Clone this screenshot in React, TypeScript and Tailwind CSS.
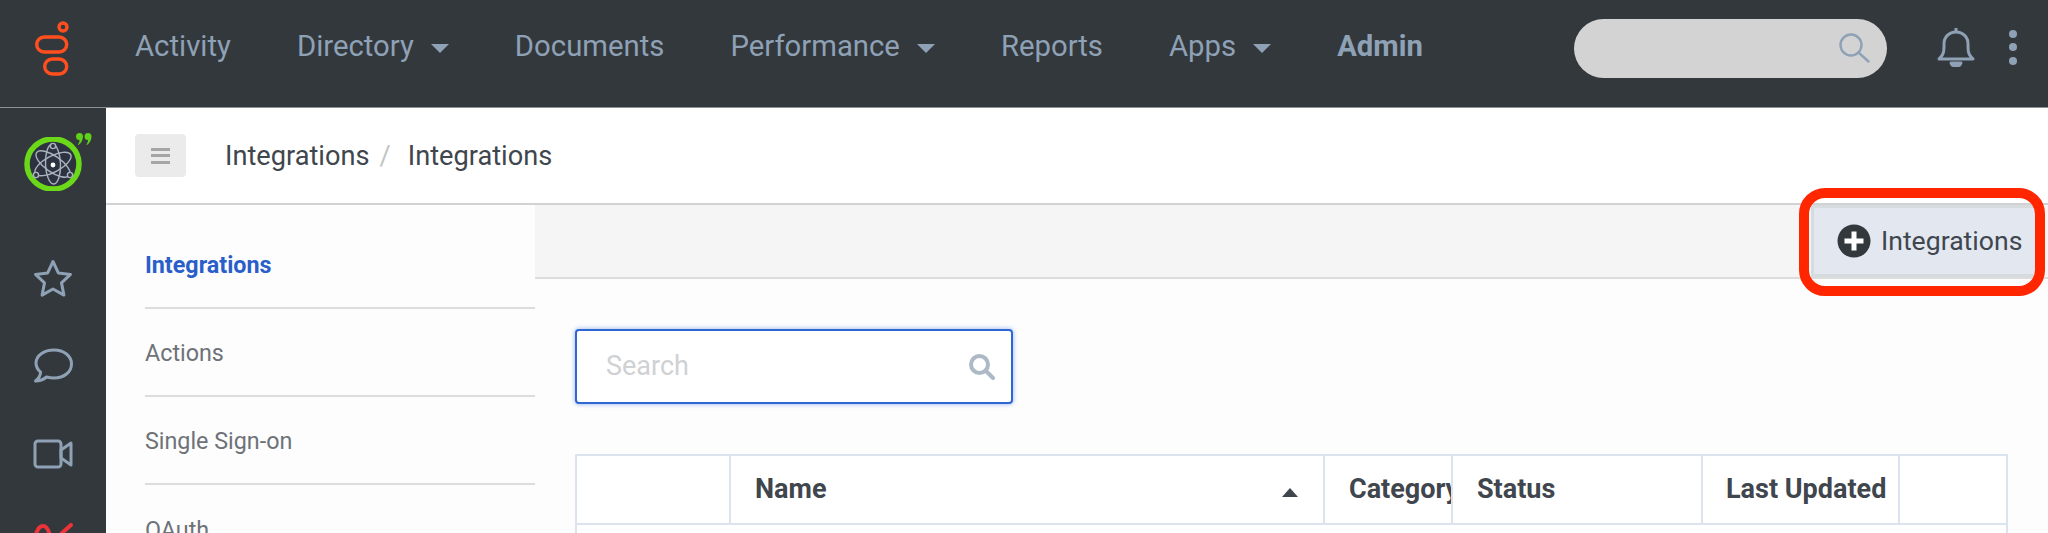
import { ReactNode } from 'react'

const navEntries = [
  { title: 'Activity' },
  { title: 'Directory', caret: true },
  { title: 'Documents' },
  { title: 'Performance', caret: true },
  { title: 'Reports' },
  { title: 'Apps', caret: true },
  { title: 'Admin', bold: true },
]

const sideEntries = ['Integrations', 'Actions', 'Single Sign-on', 'OAuth']

const GenesysLogo = () => (
  <svg width="36" height="56" viewBox="0 0 36 56" fill="none" stroke="#ff4f1f" strokeWidth="3.4">
    <circle cx="29" cy="6" r="4" />
    <rect x="2.700" y="16" width="30" height="15" rx="7.500" />
    <rect x="10.700" y="38" width="22" height="15" rx="7.500" />
  </svg>
)

const Avatar = () => (
  <div className="relative h-[54px] w-[58px]">
    <svg width="58" height="54" viewBox="0 0 58 54" fill="none">
      <ellipse cx="29" cy="27" rx="26" ry="25" fill="#2d3240" stroke="#6bd91a" strokeWidth="5.5" />
      <g stroke="#aab4bd" strokeWidth="1.4">
        <ellipse cx="29" cy="27" rx="20" ry="8" transform="rotate(-28 29 27)" />
        <ellipse cx="29" cy="27" rx="20" ry="8" transform="rotate(35 29 27)" />
        <ellipse cx="29" cy="27" rx="20" ry="7.5" transform="rotate(88 29 27)" />
        <circle cx="29" cy="9" r="2.6" fill="#2d3240" />
        <circle cx="12" cy="38" r="2.6" fill="#2d3240" />
        <circle cx="46" cy="38" r="2.6" fill="#2d3240" />
      </g>
      <circle cx="29" cy="28" r="2.4" fill="#ffffff" />
    </svg>
    {/* little quote badge on the avatar */}
    <svg className="absolute left-[52px] top-[-4px]" width="16" height="13" viewBox="0 0 16 13" fill="#5fd117">
      <path d="M0 3.500a3.500 3.500 0 0 1 7 0c0 3.500-2 7-4.500 8.500l-.6-.8c1-1 1.500-2 1.600-4.200A3.500 3.500 0 0 1 0 3.500z" />
      <path d="M8.500 3.500a3.500 3.500 0 0 1 7 0c0 3.500-2 7-4.500 8.500l-.6-.8c1-1 1.500-2 1.600-4.200a3.500 3.500 0 0 1-3.500-3.500z" />
    </svg>
  </div>
)

const RailIcon = ({ children, className }: { children: ReactNode; className: string }) => (
  <div className={`flex justify-center ${className}`}>{children}</div>
)

const Rail = () => (
  <div className="flex w-[106px] shrink-0 flex-col items-center bg-[#33383d]">
    <div className="mt-[29px]">
      <Avatar />
    </div>
    <RailIcon className="mt-[68px]">
      <svg width="40" height="39" viewBox="0 0 40 39" fill="none" stroke="#8ea1b5" strokeWidth="3" strokeLinejoin="round">
        <path d="M20 2.5l5.3 11.4 12.2 1.5-9 8.5 2.4 12.2L20 30l-10.900 6.100 2.400-12.200-9-8.500 12.200-1.500z" />
      </svg>
    </RailIcon>
    <RailIcon className="mt-[50px]">
      <svg width="40" height="35" viewBox="0 0 40 35" fill="none" stroke="#8ea1b5" strokeWidth="3" strokeLinejoin="round">
        <path d="M21 2C11 2 3 7.500 3 15c0 3.500 1.800 6.800 4.600 9.200C7.400 27.500 5.500 30.800 2.500 33c4.500 0 8.300-1.700 11-4 2.300.6 4.800 1 7.500 1 10 0 17.500-6 17.500-14S31 2 21 2z" />
      </svg>
    </RailIcon>
    <RailIcon className="mt-[56px]">
      <svg width="40" height="30" viewBox="0 0 40 30" fill="none" stroke="#8ea1b5" strokeWidth="3" strokeLinejoin="round">
        <rect x="2" y="2" width="26" height="26" rx="3" />
        <path d="M28 11l10-7v22l-10-7z" />
      </svg>
    </RailIcon>
    <RailIcon className="mt-[54px]">
      <svg width="40" height="20" viewBox="0 0 40 20" fill="none" stroke="#ee3338" strokeWidth="4" strokeLinecap="round">
        <path d="M2 20c0-9 3-17 8-17 5 0 7 7 8 17M18 20L38 2" />
      </svg>
    </RailIcon>
  </div>
)

const HeaderCell = ({
  width,
  children,
  last,
  className = '',
}: {
  width: string
  children?: ReactNode
  last?: boolean
  className?: string
}) => (
  <div
    className={`flex h-full shrink-0 items-center text-[27px] font-bold text-[#3f464d] ${width} ${
      last ? '' : 'border-r-2 border-[#dbe3ee]'
    } ${className}`}
  >
    {children}
  </div>
)

export default function App() {
  return (
    <div className="relative flex h-[533px] w-[2048px] flex-col overflow-hidden bg-white font-['Roboto',sans-serif]">
      {/* top bar */}
      <div className="flex h-[108px] shrink-0 items-center border-b border-[#8d9196] bg-[#33383d] pb-[13px]">
        <div className="flex w-[135px] shrink-0 justify-start pl-[34px] pt-[4px]">
          <GenesysLogo />
        </div>
        <div className="flex items-center gap-[66px] text-[29.3px] text-[#8ea1b5]">
          {navEntries.map((item) => (
            <div key={item.title} className={`flex items-center ${item.bold ? 'font-bold' : ''}`}>
              {item.title}
              {item.caret && (
                <div className="ml-[17px] mt-[2px] h-0 w-0 border-x-[9px] border-t-[9px] border-x-transparent border-t-[#8ea1b5]" />
              )}
            </div>
          ))}
        </div>
        <div className="flex-1" />
        <div className="mt-[2px] flex h-[59px] w-[313px] items-center justify-end rounded-full bg-[#d3d3d3] pr-[17px]">
          <svg width="32" height="32" viewBox="0 0 32 32" fill="none" stroke="#8ea1b5" strokeWidth="2.400" strokeLinecap="round">
            <circle cx="13" cy="13" r="10.500" />
            <path d="M21 21l9.500 8.500" />
          </svg>
        </div>
        <svg className="ml-[50px]" width="38" height="40" viewBox="0 0 38 40" fill="none" stroke="#8ea1b5" strokeWidth="3" strokeLinejoin="round">
          <path d="M2 32c3-3 5-5 5-12v-3c0-7 5-12 12-12s12 5 12 12v3c0 7 2 9 5 12z" />
          <path d="M19 1v3" />
          <path d="M14 36c1 4 9 4 10 0z" fill="#8ea1b5" />
        </svg>
        <div className="ml-[34px] mr-[31px] flex flex-col gap-[5.500px]">
          <div className="h-[8px] w-[8px] rounded-full bg-[#8ea1b5]" />
          <div className="h-[8px] w-[8px] rounded-full bg-[#8ea1b5]" />
          <div className="h-[8px] w-[8px] rounded-full bg-[#8ea1b5]" />
        </div>
      </div>

      <div className="flex min-h-0 flex-1">
        <Rail />
        <div className="flex min-w-0 flex-1 flex-col">
          {/* breadcrumb */}
          <div className="flex h-[97px] shrink-0 items-center border-b-2 border-[#d2d2d2] pl-[29px]">
            <div className="flex h-[43px] w-[51px] items-center justify-center rounded-[4px] bg-[#ebebeb]">
              <div className="flex flex-col gap-[3.500px]">
                <div className="h-[3px] w-[19px] bg-[#a6a6a6]" />
                <div className="h-[3px] w-[19px] bg-[#a6a6a6]" />
                <div className="h-[3px] w-[19px] bg-[#a6a6a6]" />
              </div>
            </div>
            <div className="ml-[39px] mt-[1px] flex items-center text-[27.2px] text-[#3f464d]">
              Integrations
              <span className="ml-[10px] mr-[17px] text-[#c4c4c4]">/</span>
              Integrations
            </div>
          </div>

          <div className="flex min-h-0 flex-1">
            {/* section menu */}
            <div className="w-[429px] shrink-0 bg-[#fdfdfd] pl-[39px] pt-[16px] text-[23.3px] text-[#6d7278]">
              {sideEntries.map((title, i) => (
                <div
                  key={title}
                  className={`flex h-[88px] items-center pt-[3px] ${i === 0 ? 'font-bold text-[#2a5fc9]' : ''} ${
                    i < 3 ? 'border-b-2 border-[#dcdcdc]' : ''
                  }`}
                >
                  {title}
                </div>
              ))}
            </div>

            <div className="flex min-w-0 flex-1 flex-col bg-[#fdfdfd]">
              {/* toolbar */}
              <div className="flex h-[74px] shrink-0 justify-end border-b-2 border-[#dcdcdc] bg-[#f5f5f5] pr-[13px]">
                <div className="flex w-[224px] items-center border-y-[3px] border-l-[3px] border-[#d6dbe0] bg-[#e2e7f0] pl-[23px]">
                  <svg width="34" height="34" viewBox="0 0 34 34">
                    <circle cx="17" cy="17" r="16.500" fill="#33383d" />
                    <path d="M14.500 7.500h5v7h7v5h-7v7h-5v-7h-7v-5h7z" fill="#ffffff" />
                  </svg>
                  <span className="ml-[10px] text-[26.6px] text-[#3f464d]">Integrations</span>
                </div>
              </div>

              {/* search */}
              <div className="ml-[40px] mt-[50px] flex h-[75px] w-[438px] shrink-0 items-center justify-between rounded-[4px] border-2 border-[#2f66d0] bg-white pl-[29px] pr-[16px] text-[27px] text-[#cfd1d3] shadow-[0_0_5px_#8fb0ee]">
                Search
                <svg width="27" height="27" viewBox="0 0 27 27" fill="none" stroke="#adb9c6" strokeWidth="4" strokeLinecap="round">
                  <circle cx="11.500" cy="11.500" r="8.500" />
                  <path d="M18 18l7 7" />
                </svg>
              </div>

              {/* table */}
              <div className="ml-[40px] mt-[50px] h-[100px] w-[1433px] shrink-0 border-x-2 border-[#dbe3ee] bg-white">
                <div className="flex h-[71px] border-y-2 border-[#dbe3ee]">
                  <HeaderCell width="w-[154px]" />
                  <HeaderCell width="w-[594px]" className="justify-between pl-[24px] pr-[25px]">
                    Name
                    <div className="mt-[6px] h-0 w-0 border-x-[8px] border-b-[9px] border-x-transparent border-b-[#3f464d]" />
                  </HeaderCell>
                  <HeaderCell width="w-[128px]" className="overflow-hidden whitespace-nowrap pl-[24px]">
                    Category
                  </HeaderCell>
                  <HeaderCell width="w-[250px]" className="pl-[24px]">
                    Status
                  </HeaderCell>
                  <HeaderCell width="w-[197px]" className="whitespace-nowrap pl-[23px]">
                    Last Updated
                  </HeaderCell>
                  <HeaderCell width="w-[106px]" last />
                </div>
              </div>
            </div>
          </div>
        </div>
      </div>

      {/* red highlight drawn over the add button */}
      <div className="absolute left-[1799px] top-[188px] h-[108px] w-[246px] rounded-[26px] border-[10px] border-[#ff2600]" />
    </div>
  )
}
